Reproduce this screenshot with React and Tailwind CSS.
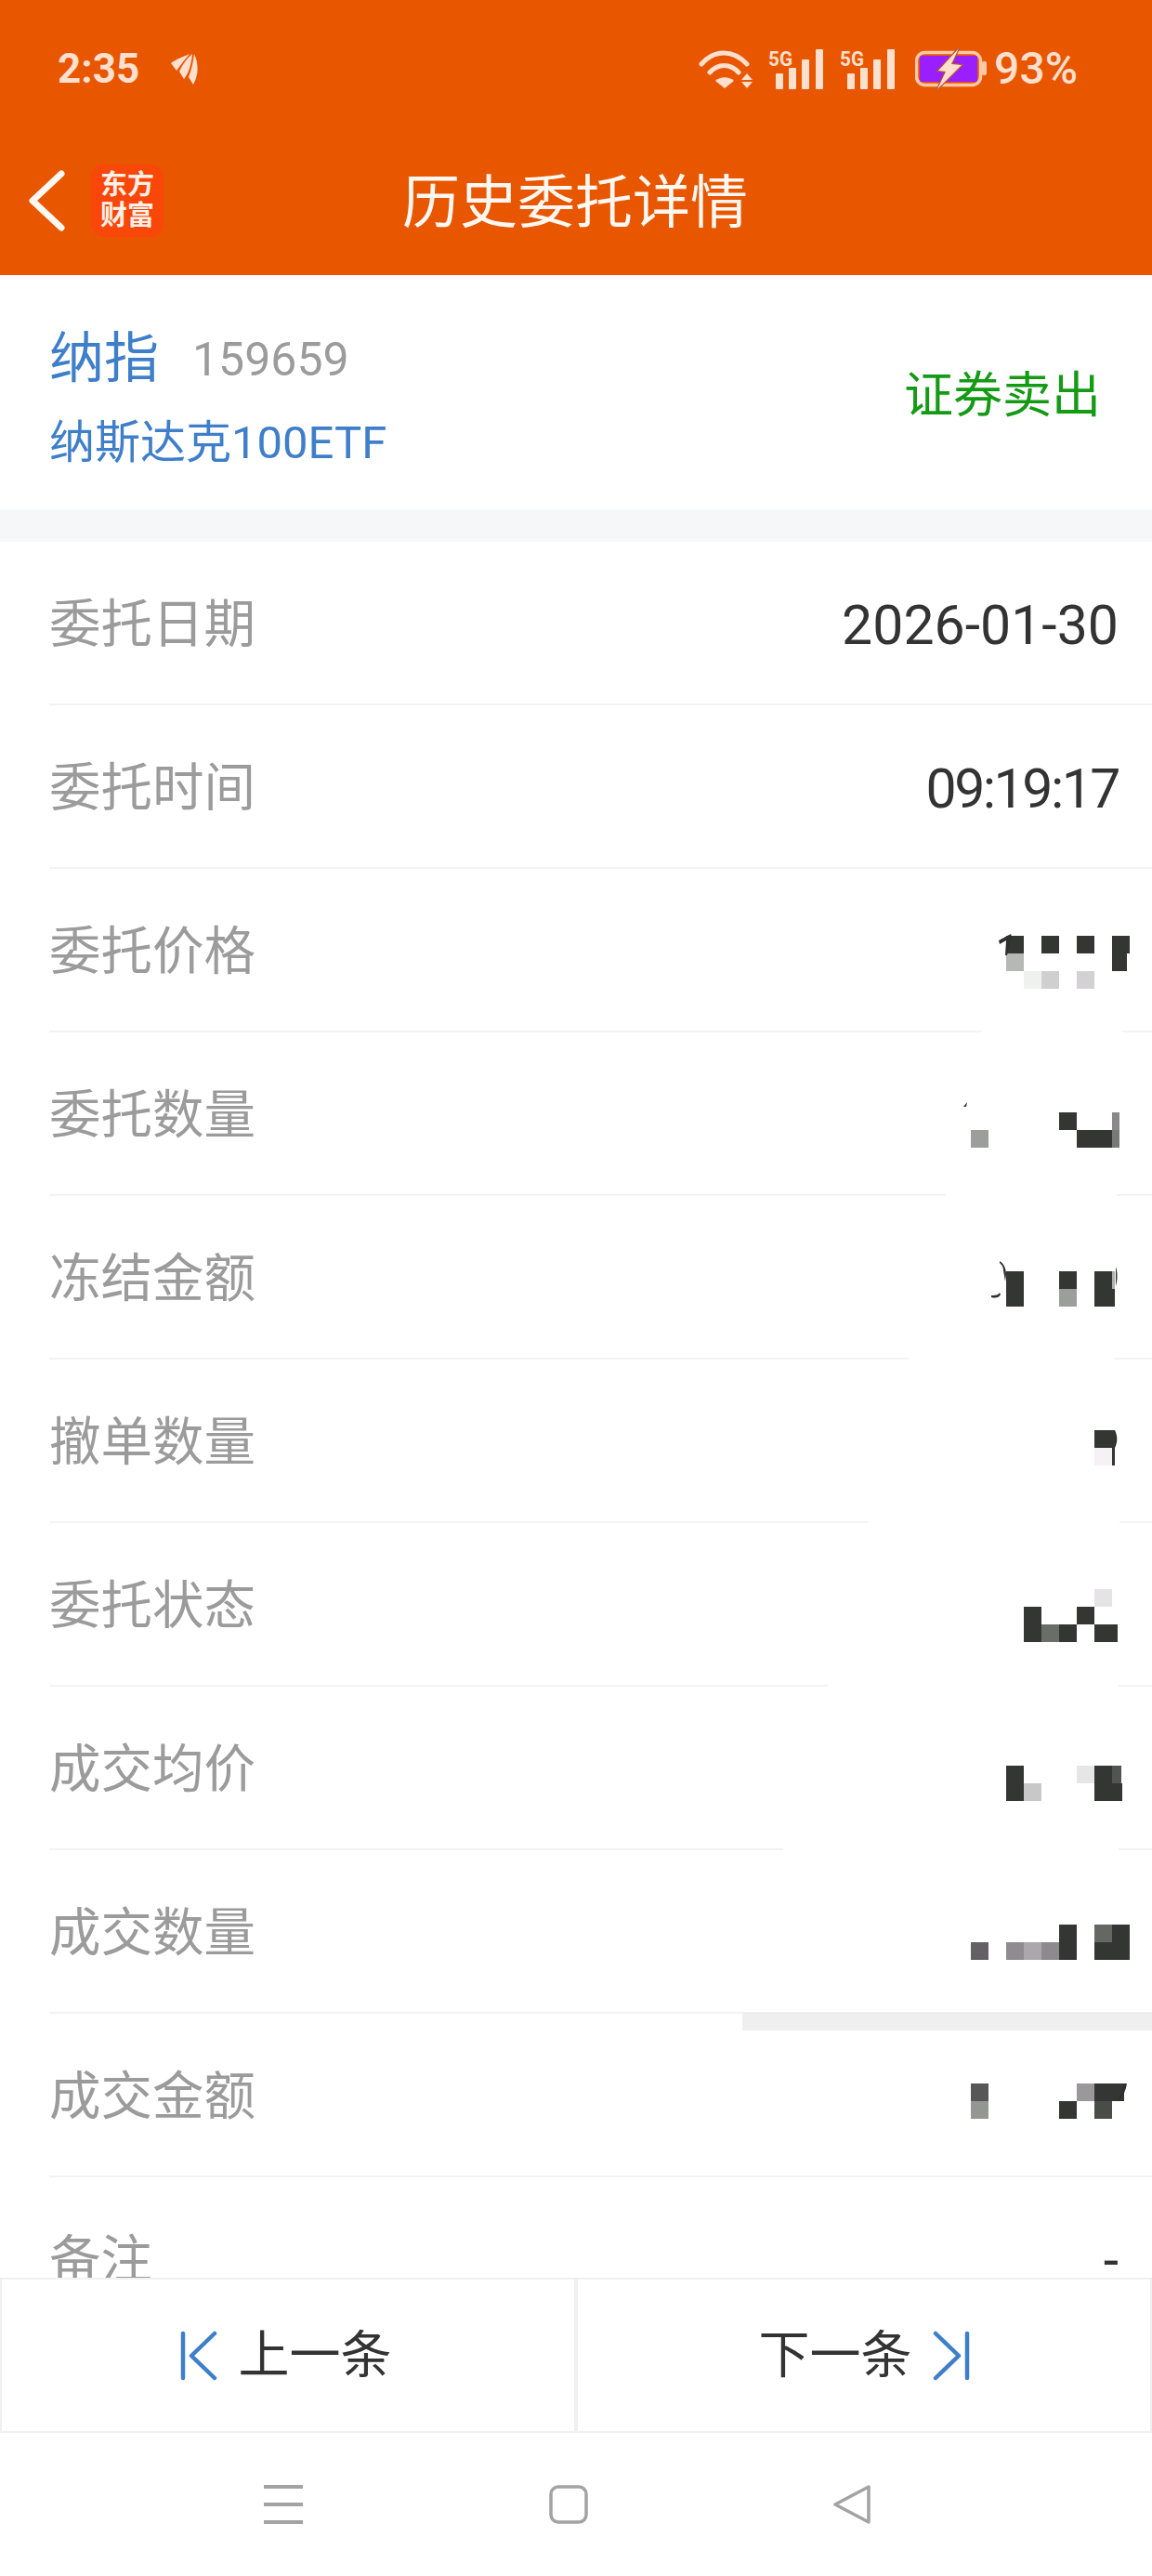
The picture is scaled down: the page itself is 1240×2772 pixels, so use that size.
import React from "react";

const DARK = "#343633";

// mosaic blocks left over the redacted values: [x, y, width, height, colour], page coordinates
const rows = [
  { label: "委托日期", value: "2026-01-30", left: "w-full", right: "" },
  { label: "委托时间", value: "09:19:17", valueClass: "tracking-[-2.5px]", left: "w-full", right: "" },
  {
    label: "委托价格",
    left: "w-[1003px]",
    right: "w-[31px]",
    blocks: [
      [1083, 1007, 19, 19, DARK], [1121, 1007, 19, 19, DARK], [1159, 1007, 19, 19, DARK], [1197, 1007, 19, 19, DARK],
      [1083, 1026, 19, 19, "#b5b8b4"], [1197, 1026, 16, 19, DARK],
      [1102, 1045, 19, 19, "#eef1ee"], [1121, 1045, 19, 19, "#cfcfcf"], [1159, 1045, 19, 19, "#d3d1d4"],
    ],
    bits: ["M1075 1012l13-7 1 3-5 20h-2l1-16-7 4z"],
  },
  {
    label: "委托数量",
    left: "w-[965px]",
    right: "w-[38px]",
    blocks: [
      [1140, 1197, 19, 19, DARK], [1197, 1197, 8, 19, "#8a888b"],
      [1045, 1216, 19, 19, "#9c9e9b"], [1159, 1216, 38, 19, DARK], [1197, 1216, 8, 19, "#777977"],
    ],
    bits: ["M1037 1191l4-5-1 5z"],
  },
  {
    label: "冻结金额",
    left: "w-[925px]",
    right: "w-[40px]",
    blocks: [
      [1083, 1368, 19, 38, DARK], [1140, 1368, 19, 19, DARK], [1140, 1387, 19, 19, "#9c9e9b"],
      [1178, 1368, 22, 38, DARK], [1197, 1368, 3, 19, "#b0b0b0"],
    ],
    bits: ["M1076 1357c5 3 7 9 7 14l-1 8-2-12c0-4-2-6-4-8zM1067 1394c4 0 7 0 9-3l1 2c-2 4-6 4-10 3z", "M1201 1363c2 6 2 14 0 21z"],
  },
  {
    label: "撤单数量",
    left: "w-[881px]",
    right: "w-[35px]",
    blocks: [
      [1178, 1539, 22, 19, DARK], [1178, 1558, 19, 19, "#f5f1f5"], [1197, 1558, 3, 19, DARK],
    ],
    bits: ["M1200 1539c3 6 3 13 0 19z"],
  },
  {
    label: "委托状态",
    left: "w-[838px]",
    right: "w-[36px]",
    blocks: [
      [1178, 1710, 19, 19, "#e6e3e6"],
      [1102, 1729, 19, 38, DARK], [1159, 1729, 19, 19, DARK],
      [1121, 1748, 19, 19, "#6b6d69"], [1140, 1748, 19, 19, DARK], [1178, 1748, 25, 19, DARK],
    ],
  },
  {
    label: "成交均价",
    left: "w-[790px]",
    right: "w-[36px]",
    blocks: [
      [1083, 1900, 19, 38, DARK], [1159, 1900, 19, 19, "#e6e6e6"], [1178, 1900, 19, 38, DARK],
      [1197, 1900, 10, 19, "#52544f"], [1102, 1919, 19, 19, "#c8c8c8"], [1197, 1919, 11, 19, DARK],
    ],
  },
  {
    label: "成交数量",
    left: "w-[746px]",
    right: "",
    blocks: [
      [1140, 2071, 19, 38, DARK], [1178, 2071, 19, 19, "#656763"], [1197, 2071, 19, 38, DARK],
      [1045, 2090, 19, 19, "#636165"], [1083, 2090, 19, 19, "#8e8c8f"], [1102, 2090, 19, 19, "#aaa8ab"],
      [1121, 2090, 19, 19, "#8c8a8e"], [1178, 2090, 19, 19, DARK],
      [799, 2165, 441, 2, "#efefef"],
    ],
  },
  {
    label: "成交金额",
    left: "w-full",
    right: "",
    blocks: [
      [799, 2167, 441, 18, "#efefef"],
      [1045, 2242, 19, 19, "#565656"], [1159, 2242, 19, 19, "#9a989b"], [1178, 2242, 32, 19, DARK],
      [1045, 2261, 19, 19, "#949693"], [1140, 2261, 19, 19, DARK], [1178, 2261, 19, 19, "#4a4c48"],
    ],
    bits: ["M1210 2242h3c-1 7-4 13-8 19h-1z"],
  },
  { label: "备注", value: "-", left: "w-full", right: "" },
];

function Mosaic({ top, blocks, bits }) {
  return (
    <svg className="absolute left-0 top-0" width="1240" height="176" viewBox={`0 ${top} 1240 176`}>
      {blocks.map(([x, y, w, h, fill]) => (
        <rect key={`${x}-${y}`} x={x} y={y} width={w} height={h} fill={fill} />
      ))}
      {bits && bits.map((d) => <path key={d} d={d} fill="#2f2f2f" />)}
    </svg>
  );
}

function Row({ row, index }) {
  const top = 583 + index * 176;
  return (
    <div className="relative">
      <div className="flex h-[174px] items-center justify-between pl-[53px] pr-[36px] pt-[6px]">
        <span className="text-[55.5px] text-[#9b9b9b]">{row.label}</span>
        {row.value && <span className={`text-[59px] text-[#333333] ${row.valueClass || ""}`}>{row.value}</span>}
      </div>
      <div className="flex h-[2px] justify-between pl-[53px]">
        <div className={`h-full bg-[#f3f3f3] ${row.left}`} />
        {row.right && <div className={`h-full bg-[#f3f3f3] ${row.right}`} />}
      </div>
      {row.blocks && <Mosaic top={top} blocks={row.blocks} bits={row.bits} />}
    </div>
  );
}

function Signal() {
  return (
    <svg width="60" height="44" viewBox="0 0 60 44" fill="#ffdfcd">
      <text x="0" y="19" fontSize="22" fontWeight="700" fontFamily="Roboto" textLength="26" lengthAdjust="spacingAndGlyphs">5G</text>
      <rect x="8" y="27" width="8" height="17" rx="1" />
      <rect x="22" y="21" width="8" height="23" rx="1" />
      <rect x="36" y="12" width="8" height="32" rx="1" />
      <rect x="51" y="1" width="8" height="43" rx="1" />
    </svg>
  );
}

function StatusBar() {
  return (
    <div className="flex h-[112px] items-center pl-[62px] pr-[80px] pt-[36px] text-[#ffdfcd]">
      <span className="text-[44px] font-bold leading-none">2:35</span>
      <svg className="ml-[33px]" width="32" height="38" viewBox="0 0 32 38" fill="#ffdfcd">
        <path d="M21 3C14 6 6 9 1 13l6 8C12 14 17 8 21 3z" />
        <path d="M24 3c-6 5-11 12-14 19l5 8c5-6 8-16 9-27z" />
        <path d="M26 3c-1 9-3 17-6 25l5 8c6-10 6-23 1-33z" />
      </svg>
      <div className="ml-auto flex items-center">
        <svg width="60" height="44" viewBox="0 0 60 44" fill="none" stroke="#ffdfcd" strokeWidth="5" strokeLinecap="round">
          <path d="M4 17C18 1 38 1 53 17" />
          <path d="M13 26C22 16 35 16 44 26" />
          <path d="M29 43l-10-8c5-5 15-5 20 0z" fill="#ffdfcd" stroke="none" />
          <path d="M53 27l6 7H47zM47 36h12l-6 7z" fill="#ffdfcd" stroke="none" />
        </svg>
        <div className="ml-[16px]"><Signal /></div>
        <div className="ml-[17px]"><Signal /></div>
        <svg className="ml-[21px]" width="78" height="44" viewBox="0 0 78 44">
          <rect x="1.5" y="4.5" width="69" height="35" rx="9" fill="none" stroke="#ffc9a8" strokeWidth="3.5" />
          <rect x="5" y="8" width="62" height="28" rx="2" fill="#9a1fff" />
          <rect x="72" y="14" width="5" height="15" rx="2" fill="#ffc9a8" />
          <path d="M47 0L25 24l8 1-9 19 26-26-11-1z" fill="#ffdfcd" stroke="#b8503a" strokeWidth="2.5" paintOrder="stroke" />
        </svg>
        <span className="ml-[7px] text-[48px] font-medium leading-none">93%</span>
      </div>
    </div>
  );
}

function NavHeader() {
  return (
    <div className="relative flex h-[184px] items-center justify-center pt-[28px]">
      <div className="absolute left-[30px] top-[65px] flex items-center">
        <svg width="42" height="66" viewBox="0 0 42 66" fill="none" stroke="#fff8f2" strokeWidth="7" strokeLinecap="round" strokeLinejoin="round">
          <path d="M36 4L5 33l31 29" />
        </svg>
        <div className="ml-[26px] flex h-[78px] w-[78px] flex-col items-center justify-center rounded-[14px] bg-[#f9470a] text-[29px] font-bold leading-[33px] text-[#fff1e8]">
          <span>东方</span>
          <span>财富</span>
        </div>
      </div>
      <span className="pr-[2px] text-[62px] text-[#fff8f2]">历史委托详情</span>
    </div>
  );
}

function SkipIcon({ flip }) {
  return (
    <svg className={flip ? "-scale-x-100" : ""} width="40" height="54" viewBox="0 0 40 54" fill="none" stroke="#3f7fca" strokeWidth="4.5" strokeLinecap="round" strokeLinejoin="round">
      <path d="M3 3v48" />
      <path d="M37 3L12 27l25 24" />
    </svg>
  );
}

export default function App() {
  return (
    <div className="flex h-[2772px] w-[1240px] flex-col overflow-hidden bg-white font-['Roboto','Noto_Sans_CJK_SC',sans-serif]">
      <div className="bg-[#e85600]">
        <StatusBar />
        <NavHeader />
      </div>

      <div className="flex h-[252px] items-center justify-between pl-[53px] pr-[55px] pt-[9px]">
        <div className="flex flex-col">
          <div className="flex items-center">
            <span className="text-[59px] leading-[76px] text-[#3f7fca]">纳指</span>
            <span className="ml-[36px] pt-[3px] text-[50px] leading-[76px] text-[#9b9b9b]">159659</span>
          </div>
          <span className="mt-[22px] text-[49px] leading-[60px] text-[#3f7fca]">纳斯达克100ETF</span>
        </div>
        <span className="text-[53px] text-[#159a15]">证券卖出</span>
      </div>
      <div className="h-[35px] bg-[#f6f7f9]" />

      <div className="min-h-0 flex-1 overflow-hidden">
        {rows.map((row, i) => (
          <Row key={row.label} row={row} index={i} />
        ))}
      </div>

      <div className="flex h-[167px] bg-white">
        <div className="flex w-[620px] items-center justify-center gap-[22px] border-2 border-[#f0f0f0] pr-[4px]">
          <SkipIcon />
          <span className="text-[55px] text-[#333333]">上一条</span>
        </div>
        <div className="flex w-[620px] items-center justify-center gap-[22px] border-2 border-[#f0f0f0]">
          <span className="text-[55px] text-[#333333]">下一条</span>
          <SkipIcon flip />
        </div>
      </div>

      <div className="flex h-[154px] items-center bg-white pl-[284px]">
        <svg width="42" height="42" viewBox="0 0 42 42" fill="#a3a3a3">
          <rect y="0" width="42" height="4" />
          <rect y="19" width="42" height="4" />
          <rect y="38" width="42" height="4" />
        </svg>
        <svg className="ml-[265px]" width="42" height="42" viewBox="0 0 42 42" fill="none" stroke="#a3a3a3" strokeWidth="3.5">
          <rect x="2" y="2" width="38" height="38" rx="8" />
        </svg>
        <svg className="ml-[264px]" width="40" height="42" viewBox="0 0 40 42" fill="none" stroke="#a3a3a3" strokeWidth="3.5" strokeLinejoin="round">
          <path d="M38 2v38L2 21z" />
        </svg>
      </div>
    </div>
  );
}
